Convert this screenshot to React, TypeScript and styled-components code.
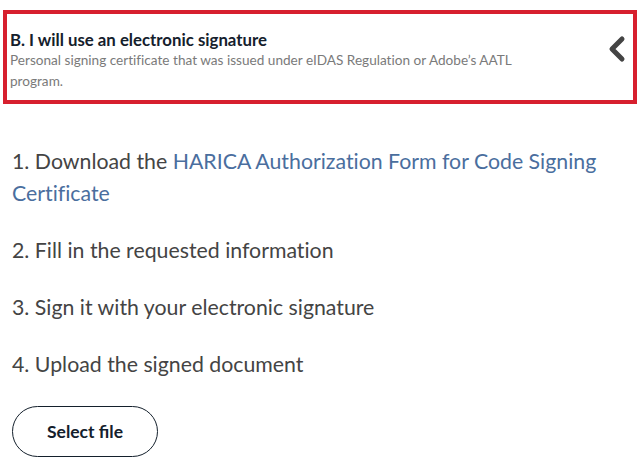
import styled, { createGlobalStyle } from "styled-components";

const GlobalStyle = createGlobalStyle`
  html, body {
    margin: 0;
    padding: 0;
    background: #ffffff;
    font-family: Lato, "Open Sans", sans-serif;
    font-variant-ligatures: none;
  }
`;

const Page = styled("div")`
  display: flex;
  flex-direction: column;
  padding: 10px 4px 0 3px;
`;

const OptionCard = styled("div")`
  display: flex;
  align-items: center;
  justify-content: space-between;
  border: 4px solid #d7202e;
  padding: 15px 6px 8px 3px;
`;

const OptionText = styled("div")`
  display: flex;
  flex-direction: column;
  max-width: 540px;
`;

const OptionTitle = styled("div")`
  font-size: 16.8px;
  font-weight: 700;
  line-height: 21px;
  color: #14202c;
`;

const OptionDescription = styled("div")`
  font-size: 13.6px;
  line-height: 21px;
  color: #7a7a7a;
`;

const Chevron = styled("svg")`
  width: 20px;
  height: 28px;
  margin-top: -24px;
`;

const Steps = styled("div")`
  display: flex;
  flex-direction: column;
  gap: 25px;
  padding: 41px 9px 0 9px;
`;

const Step = styled("p")`
  margin: 0;
  font-size: 21.3px;
  line-height: 32px;
  color: #444444;
`;

const StepLink = styled("a")`
  color: #4a6e9e;
  text-decoration: none;
`;

const SelectButton = styled("button")`
  align-self: flex-start;
  margin: 26px 0 0 9px;
  width: 146px;
  height: 51px;
  border: 1px solid #14202c;
  border-radius: 26px;
  background: #ffffff;
  font-family: Lato, "Open Sans", sans-serif;
  font-size: 17.5px;
  font-weight: 700;
  color: #14202c;
`;

export default function App() {
  return (
    <>
      <GlobalStyle />
      <Page>
        <OptionCard>
          <OptionText>
            <OptionTitle>B. I will use an electronic signature</OptionTitle>
            <OptionDescription>
              Personal signing certificate that was issued under eIDAS
              Regulation or Adobe’s AATL program.
            </OptionDescription>
          </OptionText>
          <Chevron viewBox="0 0 20 28">
            <polyline
              points="15,4 5,14 15,24"
              fill="none"
              stroke="#444444"
              strokeWidth="5"
              strokeLinecap="round"
              strokeLinejoin="round"
            />
          </Chevron>
        </OptionCard>
        <Steps>
          <Step>
            1. Download the{" "}
            <StepLink href="#">
              HARICA Authorization Form for Code Signing Certificate
            </StepLink>
          </Step>
          <Step>2. Fill in the requested information</Step>
          <Step>3. Sign it with your electronic signature</Step>
          <Step>4. Upload the signed document</Step>
        </Steps>
        <SelectButton>Select file</SelectButton>
      </Page>
    </>
  );
}
